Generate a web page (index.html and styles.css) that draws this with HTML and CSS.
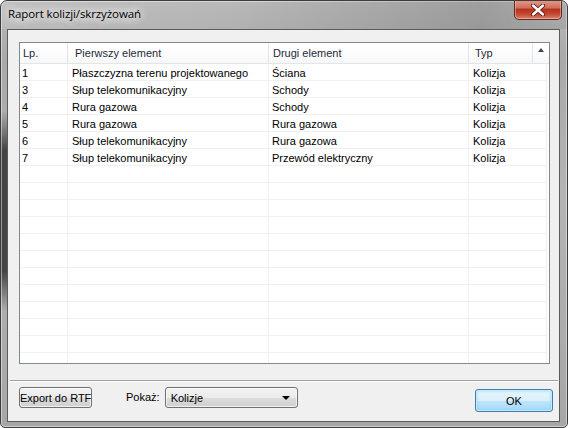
FILE: index.html
```html
<!DOCTYPE html>
<html lang="pl">
<head>
<meta charset="utf-8">
<title>Raport kolizji/skrzyżowań</title>
<link rel="stylesheet" href="styles.css">
</head>
<body>
<div class="window">
  <div class="titlebar">
    <span class="title">Raport kolizji/skrzyżowań</span>
    <div class="close">
      <svg width="16" height="12" viewBox="0 0 16 12">
        <path d="M3 1.5 L13 10.5 M13 1.5 L3 10.5" stroke="#5a1a10" stroke-width="4.2" stroke-linecap="round"/>
        <path d="M3 1.5 L13 10.5 M13 1.5 L3 10.5" stroke="#ffffff" stroke-width="2.4" stroke-linecap="round"/>
      </svg>
    </div>
  </div>
  <div class="client">
    <div class="list">
      <div class="header">
        <div class="hcell c1">Lp.</div>
        <div class="hcell c2">Pierwszy element</div>
        <div class="hcell c3">Drugi element</div>
        <div class="hcell c4">Typ</div>
        <div class="hcell c5"><span class="sort"></span></div>
      </div>
      <div class="rows">
        <div class="row"><div class="cell c1">1</div><div class="cell c2">Płaszczyzna terenu projektowanego</div><div class="cell c3">Ściana</div><div class="cell c4">Kolizja</div></div>
        <div class="row"><div class="cell c1">3</div><div class="cell c2">Słup telekomunikacyjny</div><div class="cell c3">Schody</div><div class="cell c4">Kolizja</div></div>
        <div class="row"><div class="cell c1">4</div><div class="cell c2">Rura gazowa</div><div class="cell c3">Schody</div><div class="cell c4">Kolizja</div></div>
        <div class="row"><div class="cell c1">5</div><div class="cell c2">Rura gazowa</div><div class="cell c3">Rura gazowa</div><div class="cell c4">Kolizja</div></div>
        <div class="row"><div class="cell c1">6</div><div class="cell c2">Słup telekomunikacyjny</div><div class="cell c3">Rura gazowa</div><div class="cell c4">Kolizja</div></div>
        <div class="row"><div class="cell c1">7</div><div class="cell c2">Słup telekomunikacyjny</div><div class="cell c3">Przewód elektryczny</div><div class="cell c4">Kolizja</div></div>
        <div class="row"><div class="cell c1"></div><div class="cell c2"></div><div class="cell c3"></div><div class="cell c4"></div></div>
        <div class="row"><div class="cell c1"></div><div class="cell c2"></div><div class="cell c3"></div><div class="cell c4"></div></div>
        <div class="row"><div class="cell c1"></div><div class="cell c2"></div><div class="cell c3"></div><div class="cell c4"></div></div>
        <div class="row"><div class="cell c1"></div><div class="cell c2"></div><div class="cell c3"></div><div class="cell c4"></div></div>
        <div class="row"><div class="cell c1"></div><div class="cell c2"></div><div class="cell c3"></div><div class="cell c4"></div></div>
        <div class="row"><div class="cell c1"></div><div class="cell c2"></div><div class="cell c3"></div><div class="cell c4"></div></div>
        <div class="row"><div class="cell c1"></div><div class="cell c2"></div><div class="cell c3"></div><div class="cell c4"></div></div>
        <div class="row"><div class="cell c1"></div><div class="cell c2"></div><div class="cell c3"></div><div class="cell c4"></div></div>
        <div class="row"><div class="cell c1"></div><div class="cell c2"></div><div class="cell c3"></div><div class="cell c4"></div></div>
        <div class="row"><div class="cell c1"></div><div class="cell c2"></div><div class="cell c3"></div><div class="cell c4"></div></div>
        <div class="row"><div class="cell c1"></div><div class="cell c2"></div><div class="cell c3"></div><div class="cell c4"></div></div>
        <div class="row"><div class="cell c1"></div><div class="cell c2"></div><div class="cell c3"></div><div class="cell c4"></div></div>
      </div>
    </div>
    <div class="separator"></div>
    <div class="footer">
      <button class="btn export">Export do RTF</button>
      <span class="label">Pokaż:</span>
      <div class="combo"><span class="combo-text">Kolizje</span><span class="combo-arrow"></span></div>
      <button class="btn ok">OK</button>
    </div>
  </div>
</div>
</body>
</html>
```

FILE: styles.css
```css
* { box-sizing: border-box; }
html, body { margin: 0; padding: 0; }
body {
  width: 568px;
  height: 428px;
  overflow: hidden;
  background: #ffffff;
  font-family: "Liberation Sans", Arial, sans-serif;
  font-size: 11px;
  color: #000;
}
.window {
  width: 568px;
  height: 428px;
  border: 1px solid #3c3c3c;
  border-radius: 7px 7px 5px 5px;
  display: flex;
  flex-direction: column;
  background:
    linear-gradient(to bottom, rgba(40,40,40,0) 110px, rgba(40,40,40,0.8) 150px, rgba(40,40,40,0.8) 270px, rgba(40,40,40,0) 310px) left top / 7px 100% no-repeat,
    linear-gradient(to bottom, #b9b9b9 0px, #a9a9a9 60px, #b4b4b4 200px, #a6a6a6 428px);
  box-shadow: inset 0 0 0 1px rgba(255,255,255,0.45);
  overflow: hidden;
}
.titlebar {
  height: 28px;
  flex: none;
  display: flex;
  align-items: flex-start;
  background: linear-gradient(to right, rgba(255,255,255,0.12), rgba(0,0,0,0) 40%, rgba(0,0,0,0.14) 85%, rgba(0,0,0,0.06));
}
.title {
  margin: 5px 0 0 7px;
  font-family: "Open Sans", "Noto Sans", sans-serif;
  font-size: 11.5px;
  letter-spacing: -0.1px;
  color: #000;
  text-shadow: 0 0 8px #f2f2f2, 0 0 8px #f2f2f2, 0 0 12px #eaeaea;
}
.close {
  margin-left: auto;
  margin-right: 5px;
  margin-top: -1px;
  width: 48px;
  height: 20px;
  border: 1px solid #5e2a24;
  border-top: none;
  border-radius: 0 0 5px 5px;
  background: linear-gradient(to bottom, #e29c8c 0%, #d0705e 40%, #b8321e 50%, #c44a32 75%, #d98470 100%);
  box-shadow: inset 0 0 0 1px rgba(255,210,200,0.45);
  display: flex;
  align-items: center;
  justify-content: center;
}
.client {
  flex: none;
  margin: 0 7px 0 6px;
  height: 393px;
  border: 1px solid #5b5b5b;
  background: #f0f0f0;
  display: flex;
  flex-direction: column;
  padding: 12px 0 0 0;
}
.list {
  margin-left: 11px;
  width: 531px;
  height: 322px;
  border: 1px solid #828790;
  background: #fff;
  overflow: hidden;
  flex: none;
}
.header {
  display: grid;
  grid-template-columns: 48px 201px 200px 64px 16px;
  height: 21px;
  border-bottom: 1px solid #e5e5e5;
  background: linear-gradient(to bottom, #ffffff, #fdfdfd 50%, #f6f7f9);
}
.hcell {
  border-right: 1px solid #e3e5e8;
  color: #1e2a3a;
  line-height: 20px;
  white-space: nowrap;
  padding-left: 5px;
  position: relative;
}
.hcell.c1 { padding-left: 3px; }
.hcell.c2 { padding-left: 7px; }
.hcell.c3 { padding-left: 4px; }
.hcell.c4 { padding-left: 6px; }
.hcell.c5 { border-right: none; }
.sort {
  position: absolute;
  left: 5px;
  top: 5px;
  width: 0;
  height: 0;
  border-left: 3.5px solid transparent;
  border-right: 3.5px solid transparent;
  border-bottom: 4px solid #3c4a5a;
}
.row {
  display: grid;
  grid-template-columns: 48px 201px 200px 78px;
  height: 17px;
}
.cell {
  border-right: 1px solid #f0f0f0;
  border-bottom: 1px solid #f0f0f0;
  line-height: 16px;
  white-space: nowrap;
  overflow: hidden;
  padding: 1px 0 0 3px;
}
.cell.c1 { padding-left: 2px; }
.cell.c2 { padding-left: 4px; }
.cell.c4 { padding-left: 4px; }
.separator {
  flex: none;
  margin: 16px 1px 0 2px;
  height: 2px;
  border-top: 1px solid #a0a0a0;
  border-bottom: 1px solid #ffffff;
}
.footer {
  display: flex;
  align-items: flex-start;
  padding: 5px 6px 0 11px;
}
.btn {
  font-family: "Liberation Sans", Arial, sans-serif;
  font-size: 11px;
  color: #000;
  border: 1px solid #707070;
  border-radius: 3px;
  background: linear-gradient(to bottom, #f2f2f2 0%, #ebebeb 50%, #dddddd 51%, #cfcfcf 100%);
  box-shadow: inset 0 0 0 1px rgba(255,255,255,0.7);
  padding: 0;
  white-space: nowrap;
}
.export {
  width: 73px;
  height: 21px;
}
.label {
  margin-left: 34px;
  margin-top: 4px;
}
.combo {
  margin-left: 5px;
  width: 133px;
  height: 21px;
  border: 1px solid #707070;
  border-radius: 3px;
  background: linear-gradient(to bottom, #f2f2f2 0%, #ebebeb 50%, #dddddd 51%, #cfcfcf 100%);
  box-shadow: inset 0 0 0 1px rgba(255,255,255,0.7);
  display: flex;
  align-items: center;
  padding: 0 7px 0 5px;
}
.combo-text { flex: 1; }
.combo-arrow {
  width: 0;
  height: 0;
  border-left: 4px solid transparent;
  border-right: 4px solid transparent;
  border-top: 4px solid #000;
}
.ok {
  margin-left: auto;
  margin-top: 2px;
  width: 78px;
  height: 23px;
  border-color: #3c7fb1;
  box-shadow: inset 0 0 0 1px #c5e8f9, inset 0 0 2px 2px rgba(120,200,240,0.35);
  background: linear-gradient(to bottom, #eaf6fd 0%, #d9f0fc 50%, #bee6fd 51%, #a7d9f5 100%);
}
```
